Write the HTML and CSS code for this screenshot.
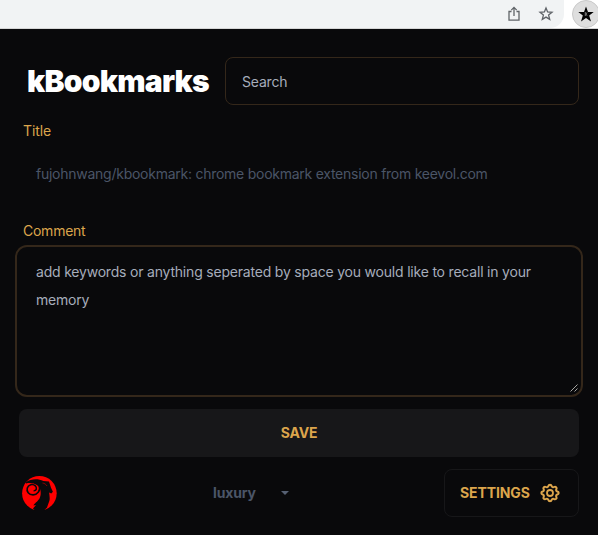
FILE: index.html
```html
<!DOCTYPE html>
<html lang="en">
<head>
<meta charset="utf-8">
<title>kBookmarks</title>
<link rel="stylesheet" href="styles.css">
</head>
<body>
<div class="toolbar">
  <div class="address">
    <svg class="icon-share" width="14" height="16" viewBox="0 0 14 16"><path d="M4.500 5.500H2v8.600h10V5.500H9.500M7 10V1.600M4.300 4.100 7 1.400l2.700 2.700" fill="none" stroke="#606468" stroke-width="1.300"/></svg>
    <svg class="icon-star" width="16" height="16" viewBox="0 0 16 16"><path d="M8 2 9.600 6 14 6.300 10.600 9.100 11.700 13.400 8 11.100 4.300 13.400 5.400 9.100 2 6.300 6.400 6Z" fill="none" stroke="#5f6368" stroke-width="1.300"/></svg>
  </div>
  <div class="extension">
    <svg width="16" height="16" viewBox="0 0 16 16"><path d="M8 .5 10 6h5.700L11.200 9.400l1.800 6L8 12l-5 3.400 1.800-6L.3 6H6Z" fill="#000"/><path d="M7.300 6v4M9 6.500 8 8l1 1.700" stroke="#aaa" stroke-width=".7" fill="none"/></svg>
  </div>
</div>
<main class="popup">
  <header class="header">
    <h1 class="brand">kBookmarks</h1>
    <div class="search">Search</div>
  </header>
  <div class="label">Title</div>
  <div class="title-field">fujohnwang/kbookmark: chrome bookmark extension from keevol.com</div>
  <div class="label">Comment</div>
  <div class="comment">add keywords or anything seperated by space you would like to recall in your<br>memory
    <svg class="grip" width="8" height="8" viewBox="0 0 8 8"><path d="M.5 7.500 7.500.5M4.500 7.500l3-3" stroke="#b5b5b0" stroke-width=".9"/></svg>
  </div>
  <div class="save">SAVE</div>
  <footer class="footer">
    <svg class="logo" width="36" height="36" viewBox="0 0 36 36">
      <circle cx="18.400" cy="18.300" r="17.300" fill="#f00"/>
      <path d="M5 7.200C10 3.800 17 3.500 22.300 6L28 6.500l2 6.200 1.900 4-1.600 1.700-2.200-.8c.3 3 1 5.500.3 8.200l-2.400 6.700L22 36.500h-7L12 33.500l3-3.500-2.500.5c.5-2 4.500-4 6.200-7.500 1-2 1.300-5 .7-8C18.500 10 12 6.800 5 8.500Z" fill="#09090b"/>
      <path d="M18.300 11c1.500 5-2.300 9-6.300 8.900-4.200-.1-6.700-3.500-5.700-6.900 1-3.500 5.500-4.600 8-2.200 2.100 2.200 1.100 5.200-1.700 5" fill="none" stroke="#09090b" stroke-width="1.600"/>
      <path d="M21.500 8c2 .3 3.500 1.300 4.500 3" fill="none" stroke="#a00" stroke-width=".8"/>
    </svg>
    <div class="theme"><span>luxury</span><i class="caret"></i></div>
    <div class="settings"><span>SETTINGS</span>
      <svg width="20" height="20" viewBox="0 0 20 20" fill="none" stroke="#dca54c" stroke-width="1.800" stroke-linejoin="round"><path d="M8.600 2.700c.36-1.460 2.440-1.460 2.800 0a1.440 1.440 0 0 0 2.150.9c1.300-.8 2.750.67 1.970 1.960a1.440 1.440 0 0 0 .89 2.150c1.460.36 1.460 2.440 0 2.800a1.440 1.440 0 0 0-.9 2.150c.8 1.300-.67 2.750-1.960 1.970a1.440 1.440 0 0 0-2.150.89c-.36 1.460-2.440 1.460-2.800 0a1.440 1.440 0 0 0-2.150-.9c-1.300.8-2.750-.67-1.970-1.960a1.440 1.440 0 0 0-.89-2.150c-1.460-.36-1.460-2.440 0-2.800a1.440 1.440 0 0 0 .9-2.150c-.8-1.300.67-2.750 1.960-1.970.84.5 1.930.06 2.150-.89Z" transform="translate(-1.500 .1) scale(1.150 1.090)"/><circle cx="10" cy="10" r="3"/></svg>
    </div>
  </footer>
</main>
</body>
</html>
```
FILE: styles.css
```css
* { box-sizing: border-box; }
body {
  margin: 0;
  height: 535px;
  overflow: hidden;
  background: #09090b;
  color: #a6adbb;
  font: 430 14px/20px Inter, "Liberation Sans", sans-serif;
  letter-spacing: -0.2px;
}
.toolbar {
  display: flex;
  height: 29px;
  background: #fff;
  border-bottom: 1px solid #d5d5d5;
  overflow: hidden;
}
.address {
  display: flex;
  flex: none;
  align-items: center;
  gap: 17px;
  width: 564px;
  padding-left: 507px;
  background: #f1f3f4;
  border-radius: 0 0 14px 0;
}
.extension {
  display: flex;
  flex: none;
  align-items: center;
  justify-content: center;
  width: 28px;
  height: 28px;
  margin-left: 8px;
  border: 1px solid #c9c9c9;
  border-radius: 50%;
  background: #dedede;
}
.popup { padding: 28px 19px 0; }
.header { display: flex; height: 48px; }
.brand {
  width: 206px;
  margin: 0;
  padding-left: 8px;
  color: #fff;
  font-size: 30px;
  font-weight: 900;
  line-height: 49px;
  letter-spacing: -0.75px;
  white-space: nowrap;
}
.search {
  flex: 1;
  padding: 0 16px;
  border: 1px solid #34271a;
  border-radius: 8px;
  line-height: 48px;
}
.label {
  height: 24px;
  padding: 0 4px;
  color: #dca54c;
  letter-spacing: -0.25px;
}
.header + .label {
  height: 45px;
  padding-top: 16px;
  letter-spacing: -0.1px;
}
.title-field {
  height: 71px;
  padding: 14px 17px;
  color: #4b5567;
  letter-spacing: -0.255px;
}
.comment {
  position: relative;
  height: 152px;
  margin: 0 -4px;
  padding: 11px 19px;
  border: 2px solid #34271a;
  border-radius: 12px;
  line-height: 28px;
  letter-spacing: -0.2px;
  white-space: nowrap;
}
.grip { position: absolute; right: 3px; bottom: 3px; }
.save {
  height: 48px;
  margin-top: 12px;
  border-radius: 8px;
  background: #171719;
  color: #dca54c;
  font-weight: 650;
  line-height: 48px;
  text-align: center;
}
.footer {
  display: flex;
  align-items: center;
  height: 48px;
  margin-top: 12px;
}
.logo { margin-left: 2px; }
.theme {
  display: flex;
  align-items: center;
  justify-content: space-between;
  width: 76px;
  margin-left: 156px;
  color: #4b5567;
  font-weight: 650;
  letter-spacing: -0.15px;
}
.caret {
  border: 4px solid transparent;
  border-top-color: #566073;
  border-bottom: 0;
}
.settings {
  display: flex;
  align-items: center;
  gap: 10px;
  width: 135px;
  height: 48px;
  margin-left: auto;
  padding-left: 15px;
  border: 1px solid #171719;
  border-radius: 8px;
  color: #dca54c;
  font-weight: 650;
  letter-spacing: -0.12px;
}
```
